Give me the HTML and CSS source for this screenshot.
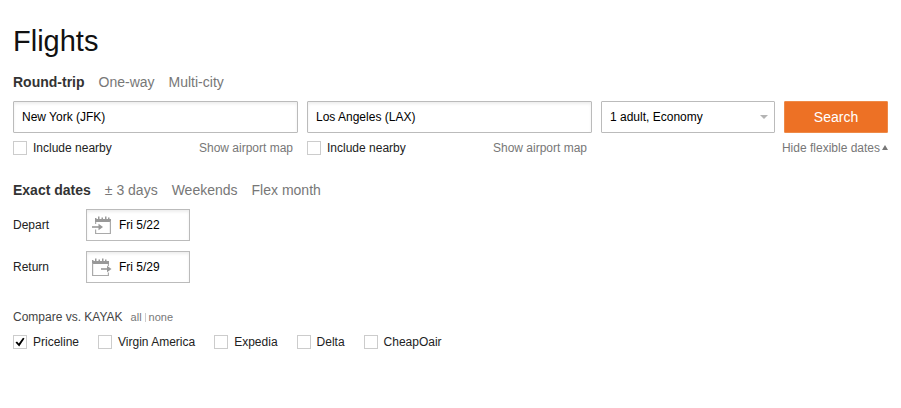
FILE: index.html
```html
<!DOCTYPE html>
<html lang="en">
<head>
    <meta charset="UTF-8">
    <meta name="viewport" content="width=device-width, initial-scale=1.0">
    <title>Flights</title>
    <link rel="stylesheet" href="styles.css">
</head>
<body>
    <form class="flight-form">
        <h1 class="title">Flights</h1>
        <!-- trip type -->
        <nav class="tabs">
            <a class="tab active" href="#">Round-trip</a>
            <a class="tab" href="#">One-way</a>
            <a class="tab" href="#">Multi-city</a>
        </nav>

        <!-- search -->
        <div class="search-grid">
            <div>
                <input class="field" type="text" aria-label="From" value="New York (JFK)">
                <div class="sub-row">
                    <label class="check"><input type="checkbox">Include nearby</label>
                    <a class="sub-link map-link" href="#">Show airport map</a>
                </div>
            </div>
            <div>
                <input class="field" type="text" aria-label="To" value="Los Angeles (LAX)">
                <div class="sub-row">
                    <label class="check"><input type="checkbox">Include nearby</label>
                    <a class="sub-link map-link" href="#">Show airport map</a>
                </div>
            </div>
            <div class="select-box">
                <select class="field select" aria-label="Travelers and cabin">
                    <option>1 adult, Economy</option>
                </select>
            </div>
            <div class="search-box">
                <button class="search-btn" type="button">Search</button>
                <div class="sub-row flex-end">
                    <a class="sub-link hide-link" href="#">Hide flexible dates</a>
                </div>
            </div>
        </div>

        <!-- dates -->
        <nav class="tabs date-tabs">
            <a class="tab active" href="#">Exact dates</a>
            <a class="tab" href="#">± 3 days</a>
            <a class="tab" href="#">Weekends</a>
            <a class="tab" href="#">Flex month</a>
        </nav>
        <div class="date-row">
            <label class="date-label" for="depart">Depart</label>
            <div class="date-box">
                <svg class="date-icon" width="20" height="20" viewBox="0 0 20 20">
                    <path fill="#999" d="M3 3h1.500v1h1.500V1.500h1.500V4h2V2.500H11V4h2V1.500h1.500V4H16V2.500h1.500V4H19v3H3z"/>
                    <path fill="none" stroke="#aaa" stroke-width="1.200" d="M3.600 7v2M3.600 14.500v4h14.800V6"/>
                    <path fill="none" stroke="#999" stroke-width="1.600" d="M0 12h8"/>
                    <path fill="#999" d="M6.500 8.800L11 12l-4.500 3.200z"/>
                </svg>
                <input class="date-input" id="depart" type="text" value="Fri 5/22">
            </div>
        </div>
        <div class="date-row">
            <label class="date-label" for="return">Return</label>
            <div class="date-box">
                <svg class="date-icon" width="20" height="20" viewBox="0 0 20 20">
                    <path fill="#999" d="M0 3h1.500v1H3V1.500h1.500V4h2V2.500H8V4h2V1.500h1.500V4H13V2.500h1.500V4H17v3H0z"/>
                    <path fill="none" stroke="#aaa" stroke-width="1.200" d="M.6 6v12.500h15.800v-3M16.400 7v2"/>
                    <path fill="none" stroke="#999" stroke-width="1.600" d="M9 12h8"/>
                    <path fill="#999" d="M15 8.800l4.500 3.200-4.500 3.200z"/>
                </svg>
                <input class="date-input" id="return" type="text" value="Fri 5/29">
            </div>
        </div>

        <!-- compare -->
        <div class="compare-head">
            <span>Compare vs. KAYAK</span>
            <span class="compare-links"><a href="#">all</a><i class="divider"></i><a href="#">none</a></span>
        </div>
        <div class="compare-list">
            <label class="check"><input type="checkbox" checked>Priceline</label>
            <label class="check"><input type="checkbox">Virgin America</label>
            <label class="check"><input type="checkbox">Expedia</label>
            <label class="check"><input type="checkbox">Delta</label>
            <label class="check"><input type="checkbox">CheapOair</label>
        </div>
    </form>
</body>
</html>
```
FILE: styles.css
```css
/*global*/
* {
    margin: 0;
    padding: 0;
    box-sizing: border-box;
}

body {
    background-color: #fff;
    color: #222;
    font-family: "Liberation Sans", Arial, sans-serif;
    font-size: 12px;
    line-height: 16px;
}

a {
    color: #777;
    text-decoration: none;
}

input,
select,
button {
    font: inherit;
    color: #000;
}

.flight-form {
    padding: 23px 13px;
}

.title {
    font-size: 29px;
    font-weight: normal;
    line-height: 36px;
    color: #111;
}

/*tabs*/
.tabs {
    display: flex;
    gap: 14px;
    margin: 14px 0 10px;
    font-size: 14px;
    line-height: 18px;
}

.tab.active {
    font-weight: bold;
    color: #333;
}

.date-tabs {
    margin: 25px 0 10px;
}

/*search*/
.search-grid {
    display: grid;
    grid-template-columns: 1fr 1fr 174px 104px;
    gap: 9px;
}

.field {
    display: block;
    width: 100%;
    height: 32px;
    padding: 0 8px;
    border: 1px solid #bbb;
    border-radius: 1px;
    background-color: #fff;
    box-shadow: inset 0 2px 3px #eee;
}

.select-box {
    position: relative;
}

.select-box::after {
    content: "";
    position: absolute;
    top: 14px;
    right: 7px;
    border: 4px solid transparent;
    border-top: 4px solid #b4b4b4;
    border-bottom: 0;
    pointer-events: none;
}

.select {
    appearance: none;
    box-shadow: none;
}

.search-btn {
    display: block;
    width: 100%;
    height: 32px;
    border: 1px solid #ee8a48;
    border-radius: 1px;
    background-color: #ed7125;
    font-size: 14px;
    color: #fff;
}

.sub-row {
    display: flex;
    justify-content: space-between;
    margin-top: 7px;
}

.flex-end {
    justify-content: flex-end;
}

.sub-link {
    white-space: nowrap;
}

.map-link {
    padding-right: 5px;
}

.hide-link::after {
    content: "";
    display: inline-block;
    margin-left: 2px;
    border: 3px solid transparent;
    border-top: 0;
    border-bottom: 5px solid #777;
    vertical-align: 2px;
}

/*checkbox*/
.check {
    display: flex;
    align-items: center;
    gap: 6px;
}

.check input {
    appearance: none;
    width: 14px;
    height: 14px;
    border: 1px solid #ccc;
    background-color: #fff;
}

.check input:checked::before {
    content: "";
    display: block;
    width: 10px;
    height: 10px;
    margin: 1px;
    background-color: #000;
    clip-path: polygon(5% 55%, 20% 45%, 38% 65%, 80% 8%, 95% 16%, 42% 95%);
}

/*dates*/
.date-row {
    display: flex;
    align-items: center;
    margin-bottom: 10px;
}

.date-label {
    width: 73px;
}

.date-box {
    display: flex;
    align-items: center;
    gap: 7px;
    width: 104px;
    height: 32px;
    padding: 0 5px;
    border: 1px solid #bbb;
    box-shadow: inset 0 2px 3px #eee;
}

.date-icon {
    flex: none;
}

.date-input {
    width: 100%;
    min-width: 0;
    border: 0;
    background: none;
}

/*compare*/
.compare-head {
    display: flex;
    gap: 8px;
    margin-top: 26px;
    color: #444;
}

.compare-links {
    display: flex;
    align-items: center;
    gap: 3px;
    font-size: 11px;
}

.divider {
    width: 1px;
    height: 9px;
    background-color: #ccc;
}

.compare-list {
    display: flex;
    gap: 19px;
    margin-top: 9px;
}
```
